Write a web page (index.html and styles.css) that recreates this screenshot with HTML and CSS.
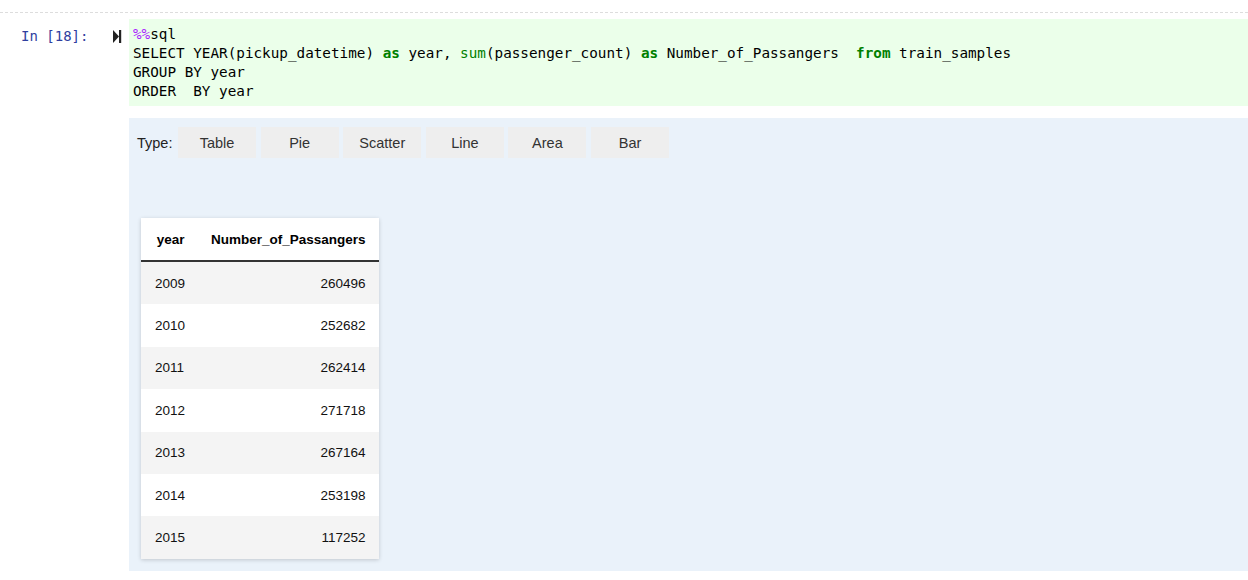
FILE: index.html
```html
<!DOCTYPE html>
<html>
<head>
<meta charset="utf-8">
<link rel="stylesheet" href="styles.css">
</head>
<body>
<div class="sep"></div>
<div class="cell">
  <div class="prompt">
    <span class="prompt-text">In [18]:</span>
    <svg class="run-icon" width="9" height="13" viewBox="0 0 9 13"><path d="M0 0 L6 6.5 L0 13 Z" fill="#222"/><rect x="6" y="0" width="2.2" height="13" fill="#222"/></svg>
  </div>
  <div class="code"><span class="magic">%%</span>sql
SELECT YEAR(pickup_datetime) <span class="kw">as</span> year, <span class="bi">sum</span>(passenger_count) <span class="kw">as</span> Number_of_Passangers  <span class="kw">from</span> train_samples
GROUP BY year
ORDER  BY year</div>
</div>
<div class="out-row">
  <div class="out-gutter"></div>
  <div class="output">
    <div class="types">
      <span class="type-label">Type:</span>
      <span class="btn">Table</span>
      <span class="btn">Pie</span>
      <span class="btn">Scatter</span>
      <span class="btn">Line</span>
      <span class="btn">Area</span>
      <span class="btn">Bar</span>
    </div>
    <table class="data">
      <thead>
        <tr><th class="c-year">year</th><th class="c-num">Number_of_Passangers</th></tr>
      </thead>
      <tbody>
        <tr><td>2009</td><td class="num">260496</td></tr>
        <tr><td>2010</td><td class="num">252682</td></tr>
        <tr><td>2011</td><td class="num">262414</td></tr>
        <tr><td>2012</td><td class="num">271718</td></tr>
        <tr><td>2013</td><td class="num">267164</td></tr>
        <tr><td>2014</td><td class="num">253198</td></tr>
        <tr><td>2015</td><td class="num">117252</td></tr>
      </tbody>
    </table>
  </div>
</div>
</body>
</html>
```
FILE: styles.css
```css
html, body {
  margin: 0;
  padding: 0;
  background: #ffffff;
}
body {
  font-family: "Liberation Sans", Arial, sans-serif;
  color: #000;
}
.sep {
  margin-top: 12px;
  border-top: 1px dashed #dddddd;
  height: 6px;
}
.cell {
  display: flex;
}
.prompt {
  width: 129px;
  flex: none;
  display: flex;
  align-items: flex-start;
  padding-top: 8px;
  box-sizing: border-box;
}
.prompt-text {
  font-family: "DejaVu Sans Mono", "Liberation Mono", monospace;
  font-size: 14px;
  line-height: 19px;
  color: #303f9f;
  margin-left: 21px;
  width: 92px;
}
.run-icon {
  margin-top: 3px;
}
.code {
  flex: 1;
  background: #ebffea;
  font-family: "DejaVu Sans Mono", "Liberation Mono", monospace;
  font-size: 14.3px;
  line-height: 19px;
  white-space: pre;
  padding: 6px 4px 5px 4px;
  color: #000;
}
.magic { color: #aa22ff; }
.kw { color: #008000; font-weight: bold; }
.bi { color: #008000; }
.out-row {
  display: flex;
  margin-top: 12px;
}
.out-gutter {
  width: 129px;
  flex: none;
}
.output {
  flex: 1;
  background: #eaf2fa;
  padding: 9px 0 13px 8px;
  height: 453px;
  box-sizing: border-box;
}
.types {
  display: flex;
  align-items: center;
  gap: 4.6px;
  height: 31px;
}
.type-label {
  font-size: 14.5px;
  color: #222;
  margin-right: 1px;
  padding-top: 1px;
}
.btn {
  width: 78px;
  height: 31px;
  line-height: 32px;
  background: #eeeeee;
  text-align: center;
  font-size: 14.5px;
  color: #333;
}
.data {
  margin-top: 60px;
  margin-left: 4px;
  border-collapse: collapse;
  background: #fff;
  box-shadow: 0 1px 4px rgba(0,0,0,0.18);
  font-size: 13.5px;
}
.data th {
  font-weight: bold;
  height: 42px;
  padding: 0 13px 0 15px;
  border-bottom: 2px solid #333;
  text-align: center;
  color: #000;
}
.data th.c-num { padding-left: 13px; }
.data td {
  height: 42.4px;
  padding: 0 13px 0 14px;
  color: #111;
}
.data td.num {
  text-align: right;
}
.data tbody tr:nth-child(odd) td {
  background: #f4f4f4;
}
```
